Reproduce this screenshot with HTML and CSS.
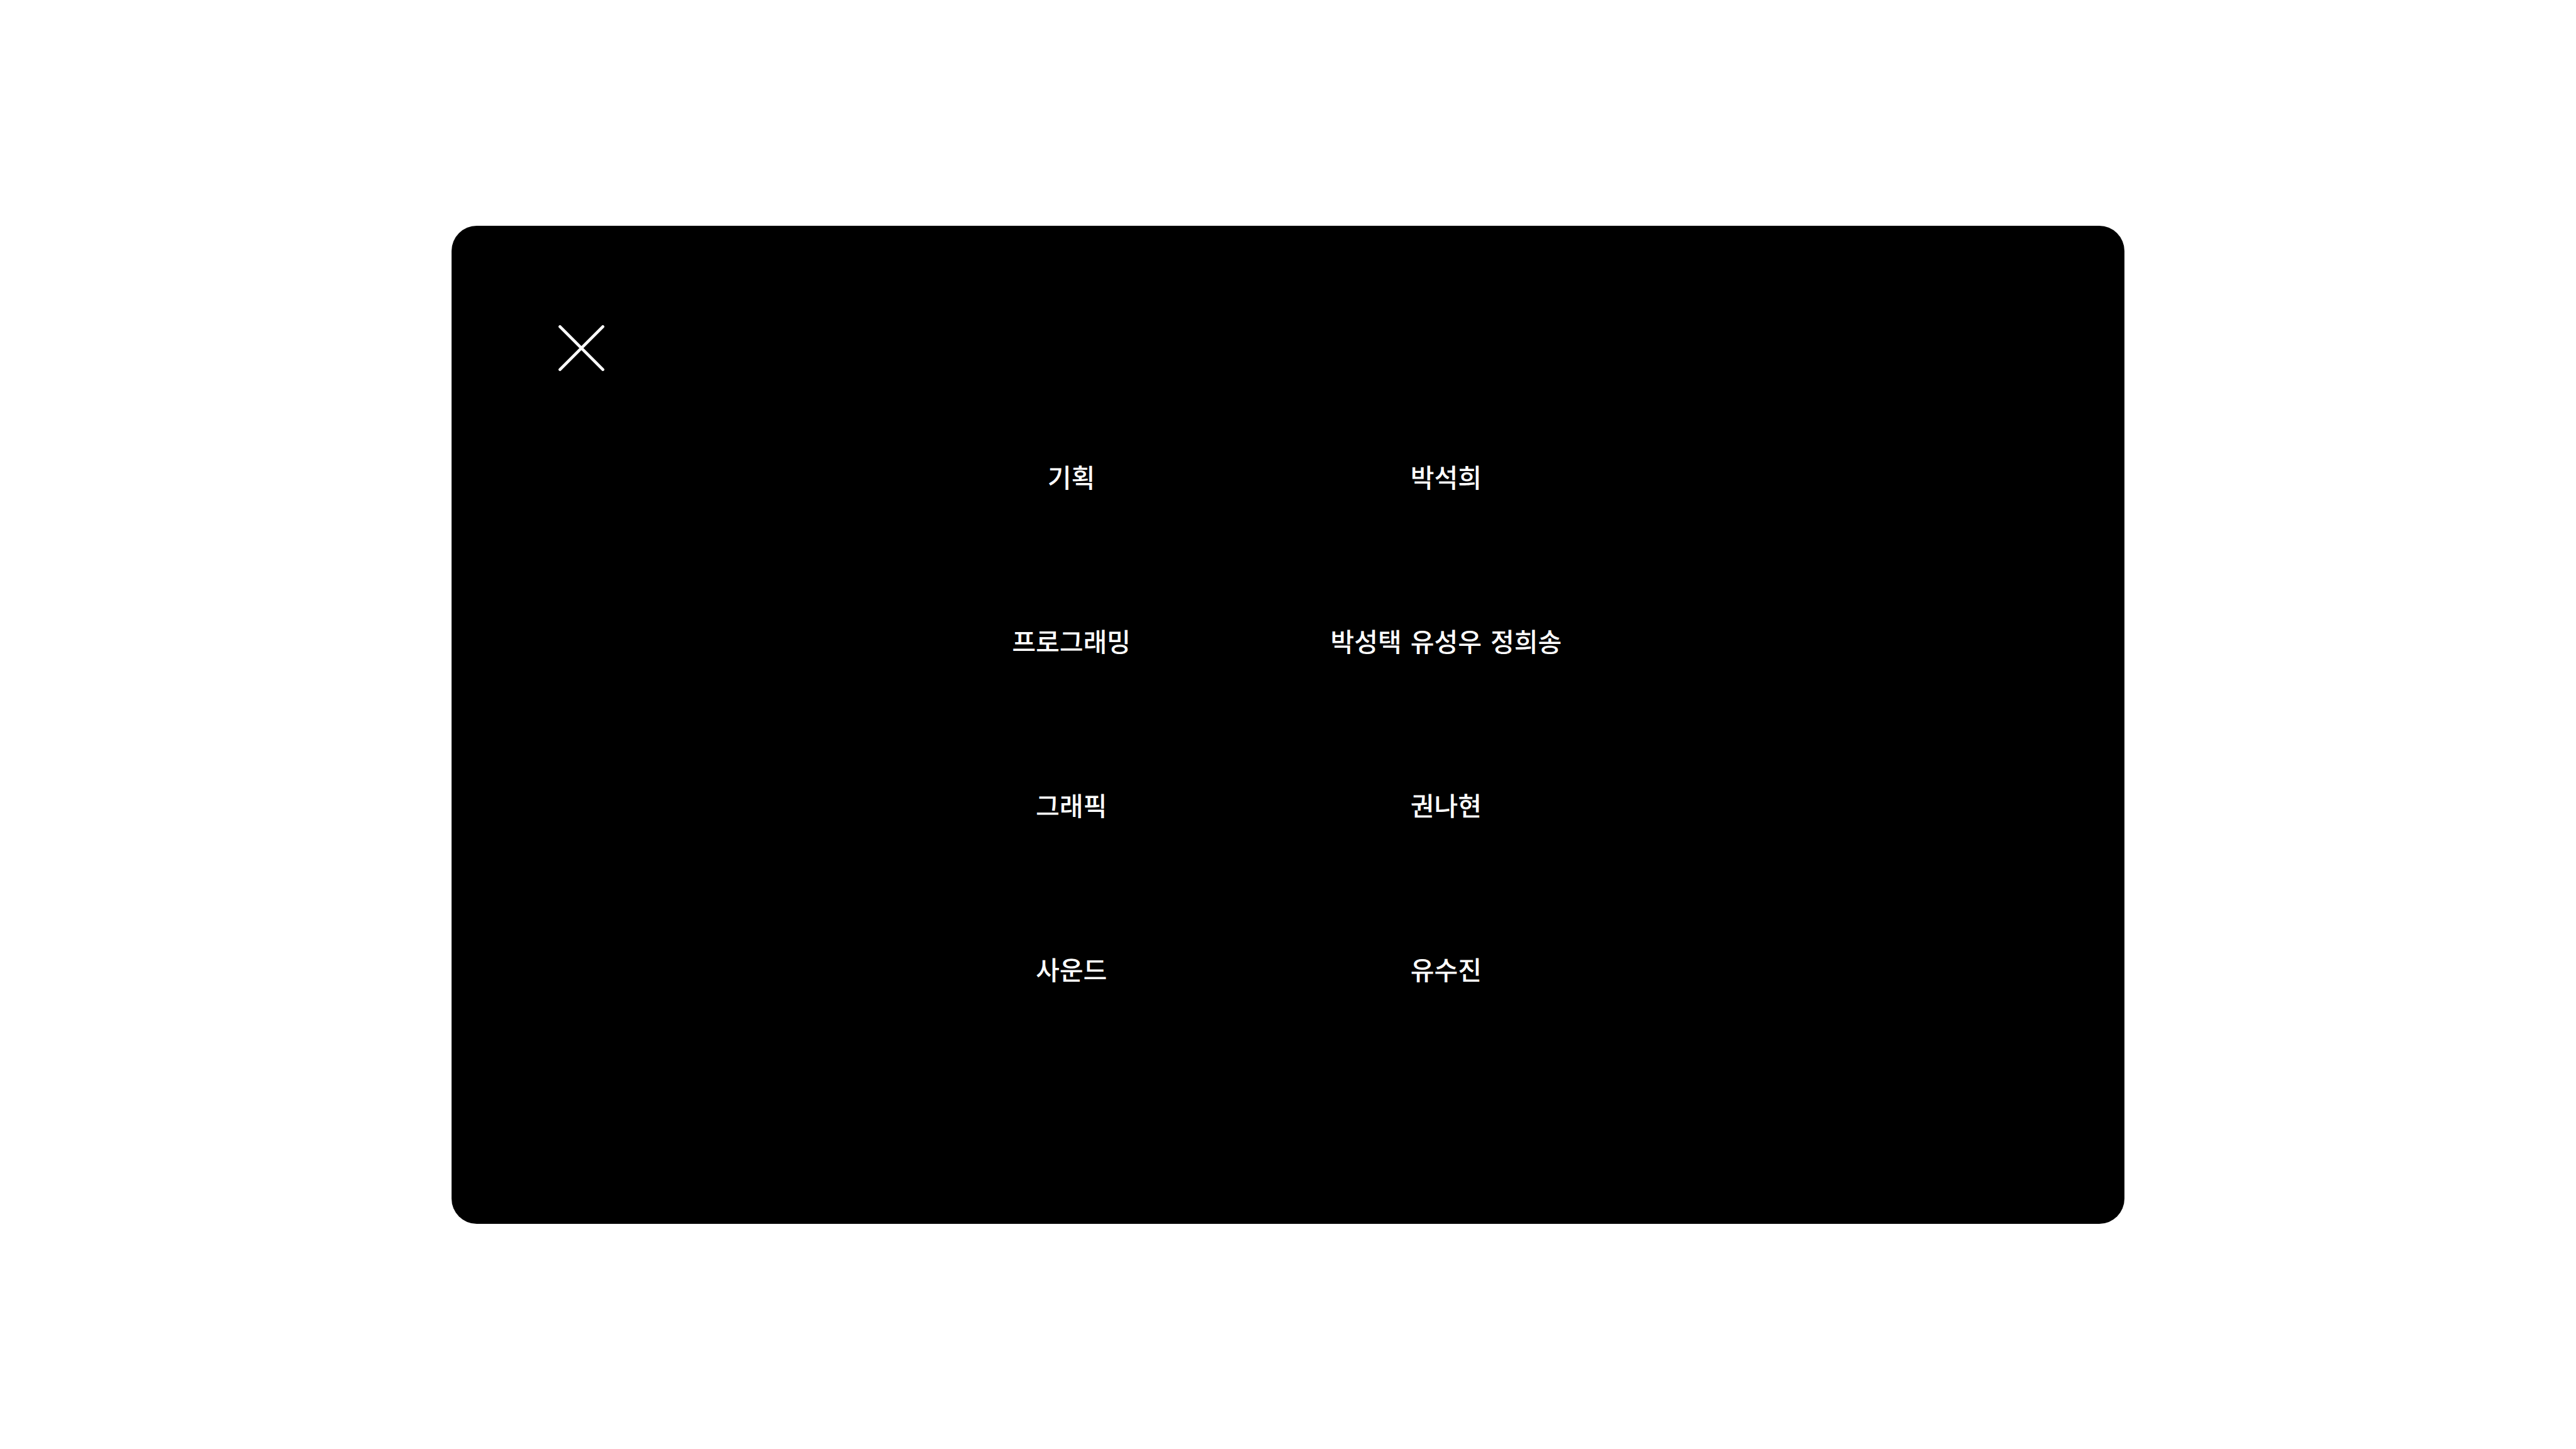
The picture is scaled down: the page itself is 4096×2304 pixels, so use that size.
FILE: index.html
```html
<!DOCTYPE html>
<html lang="ko">
<head>
<meta charset="utf-8">
<meta name="viewport" content="width=device-width, initial-scale=1">
<title>크레딧</title>
<link rel="stylesheet" href="styles.css">
</head>
<body class="page">
<main class="card">
  <button class="close" type="button" aria-label="닫기">
    <svg class="close-icon" viewBox="0 0 73 73" aria-hidden="true"><path d="M2.4 2.4 70.6 70.6M70.6 2.4 2.4 70.6"/></svg>
  </button>
  <table class="credits">
    <tbody>
      <tr><th class="cell" scope="row">기획</th><td class="cell">박석희</td></tr>
      <tr><th class="cell" scope="row">프로그래밍</th><td class="cell"><div class="names"><span>박성택</span> <span>유성우</span> <span>정희송</span></div></td></tr>
      <tr><th class="cell" scope="row">그래픽</th><td class="cell">권나현</td></tr>
      <tr><th class="cell" scope="row">사운드</th><td class="cell">유수진</td></tr>
    </tbody>
  </table>
</main>
</body>
</html>
```

FILE: styles.css
```css
* {
  box-sizing: border-box;
}

.page {
  display: flex;
  align-items: center;
  justify-content: center;
  min-height: 100vh;
  margin: 0;
  background: #fff;
  font-family: "Noto Sans CJK KR", sans-serif;
}

.card {
  width: 64.94%;
  padding: 158px 0 275px;
  border-radius: 40px;
  background: #000;
  color: #fff;
}

.close {
  display: block;
  margin: 0 0 0 170px;
  padding: 0;
  border: 0;
  background: none;
  color: inherit;
  cursor: pointer;
}

.close-icon {
  display: block;
  width: 73px;
  height: 73px;
  fill: none;
  stroke: currentColor;
  stroke-width: 4.6;
  stroke-linecap: round;
}

.credits {
  width: 44.8%;
  margin: 37px 0 0 25.85%;
  border-collapse: collapse;
  table-layout: fixed;
}

.cell {
  height: 261px;
  padding: 0;
  font-size: 41px;
  font-weight: 500;
  line-height: 60px;
  text-align: center;
  vertical-align: middle;
  white-space: nowrap;
}

.names {
  display: flex;
  justify-content: center;
  gap: 14px;
}
```
